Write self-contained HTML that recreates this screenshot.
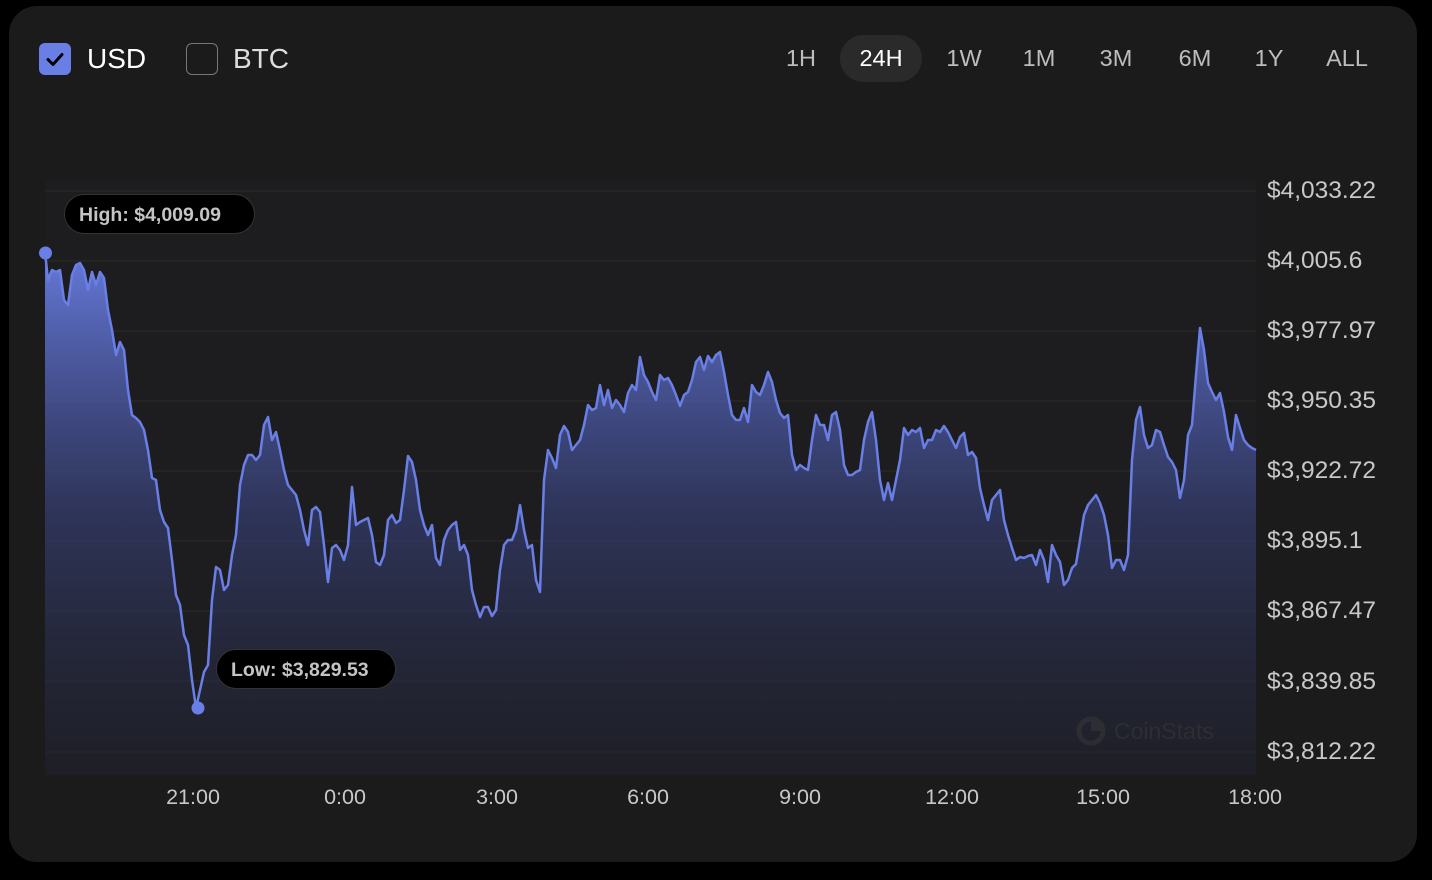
<!DOCTYPE html>
<html><head><meta charset="utf-8"><style>
html,body{margin:0;padding:0;background:#000;width:1432px;height:880px;overflow:hidden;font-family:"Liberation Sans",Arial,sans-serif}
.card{position:absolute;left:9px;top:6px;width:1408px;height:856px;background:#1b1b1b;border-radius:28px}
.cb{position:absolute;top:43px;width:32px;height:32px;border-radius:6px;box-sizing:border-box}
.lbl{position:absolute;top:42px;font-size:28px;line-height:34px}
.tb{position:absolute;top:35px;height:47px;line-height:47px;font-size:23.5px;color:#bdbdbd;text-align:center;transform:translateX(-50%)}
.yl{position:absolute;left:1267px;font-size:24.5px;color:#c8c8c8;line-height:26px}
.xl{position:absolute;top:785px;font-size:21.5px;color:#c8c8c8;transform:translateX(-50%)}
.pill{position:absolute;height:40px;line-height:40px;background:#000;border:1px solid #333;border-radius:21px;color:#c4c4c4;font-weight:bold;font-size:19.5px;padding:0 14px;box-sizing:border-box;white-space:nowrap}
</style></head><body>
<div class="card"></div>
<div class="cb" style="left:39px;background:#6a7fe6"><svg width="32" height="32"><path d="M9 16.5l5 5 9-10" stroke="#000" stroke-width="3" fill="none" stroke-linecap="round" stroke-linejoin="round"/></svg></div>
<div class="lbl" style="left:87px;color:#fff">USD</div>
<div class="cb" style="left:186px;border:1.5px solid #777"></div>
<div class="lbl" style="left:233px;color:#ddd">BTC</div>
<div style="position:absolute;left:840px;top:35px;width:82px;height:47px;border-radius:24px;background:#2a2a2a"></div>
<div class="tb" style="left:801px">1H</div>
<div class="tb" style="left:881px;color:#fff">24H</div>
<div class="tb" style="left:964px">1W</div>
<div class="tb" style="left:1039px">1M</div>
<div class="tb" style="left:1116px">3M</div>
<div class="tb" style="left:1195px">6M</div>
<div class="tb" style="left:1269px">1Y</div>
<div class="tb" style="left:1347px">ALL</div>
<svg style="position:absolute;left:0;top:0" width="1432" height="880">
<defs><linearGradient id="g" gradientUnits="userSpaceOnUse" x1="0" y1="250" x2="0" y2="775"><stop offset="0" stop-color="#6a7fe6" stop-opacity="0.95"/><stop offset="0.5" stop-color="#3a4480" stop-opacity="0.6"/><stop offset="1" stop-color="#1f2130" stop-opacity="0.4"/></linearGradient></defs>
<rect x="45" y="180" width="1211" height="595" fill="#1d1d1f"/>
<g stroke="#2a2a2a" stroke-width="1">
<line x1="45" y1="191" x2="1256" y2="191"/><line x1="45" y1="261" x2="1256" y2="261"/><line x1="45" y1="331" x2="1256" y2="331"/><line x1="45" y1="401" x2="1256" y2="401"/><line x1="45" y1="471" x2="1256" y2="471"/><line x1="45" y1="541" x2="1256" y2="541"/><line x1="45" y1="611" x2="1256" y2="611"/><line x1="45" y1="681" x2="1256" y2="681"/><line x1="45" y1="752" x2="1256" y2="752"/>
</g>
<g id="d">
<polygon fill="url(#g)" points="45,775 45,252 48,280 52,270 56,272 60,270 64,300 68,305 72,275 76,265 80,263 84,270 88,290 92,272 96,285 100,272 104,278 108,310 112,330 116,355 120,342 124,350 128,390 132,415 136,418 140,422 144,430 148,450 152,478 156,480 160,510 164,522 168,528 172,560 176,595 180,605 184,635 188,645 192,680 196,708 200,690 204,672 208,665 212,600 216,567 220,570 224,590 228,585 232,555 236,535 240,485 244,465 248,455 252,455 256,460 260,455 264,425 268,417 272,440 276,432 280,450 284,470 288,485 292,490 296,495 300,510 304,530 308,545 312,510 316,507 320,512 324,545 328,582 332,548 336,545 340,550 344,560 348,545 352,487 356,525 360,522 364,520 368,518 372,535 376,562 380,565 384,555 388,520 392,515 396,523 400,520 404,490 408,456 412,462 416,480 420,510 424,525 428,535 432,525 436,558 440,565 444,540 448,530 452,525 456,522 460,550 464,545 468,555 472,590 476,605 480,617 484,607 488,607 492,616 496,610 500,570 504,545 508,540 512,540 516,530 520,505 524,530 528,548 532,545 536,580 540,592 544,480 548,450 552,458 556,468 560,435 564,426 568,432 572,450 576,445 580,440 584,425 588,405 592,410 596,408 600,385 604,405 608,390 612,408 616,400 620,405 624,412 628,393 632,385 636,390 640,357 644,375 648,382 652,392 656,400 660,375 664,380 668,378 672,385 676,395 680,406 684,395 688,392 692,380 696,362 700,357 704,370 708,356 712,362 716,355 720,352 724,372 728,395 732,415 736,420 740,420 744,408 748,422 752,385 756,392 760,395 764,385 768,372 772,382 776,400 780,413 784,418 788,415 792,455 796,470 800,465 804,468 808,470 812,440 816,415 820,425 824,425 828,440 832,415 836,412 840,430 844,465 848,475 852,475 856,472 860,470 864,440 868,422 872,412 876,440 880,480 884,500 888,483 892,500 896,480 900,460 904,428 908,435 912,430 916,432 920,428 924,448 928,440 932,440 936,430 940,432 944,426 948,432 952,440 956,448 960,437 964,433 968,455 972,452 976,458 980,488 984,505 988,520 992,500 996,495 1000,490 1004,520 1008,535 1012,548 1016,560 1020,557 1024,558 1028,556 1032,555 1036,565 1040,550 1044,560 1048,582 1052,545 1056,555 1060,562 1064,585 1068,580 1072,568 1076,564 1080,540 1084,515 1088,505 1092,500 1096,495 1100,503 1104,515 1108,535 1112,568 1116,560 1120,560 1124,570 1128,555 1132,460 1136,420 1140,407 1144,435 1148,448 1152,445 1156,430 1160,432 1164,445 1168,457 1172,462 1176,470 1180,498 1184,480 1188,435 1192,425 1196,375 1200,328 1204,350 1208,383 1212,392 1216,400 1220,393 1224,412 1228,437 1232,450 1236,415 1240,428 1244,440 1248,445 1252,448 1256,450 1256,775"/>
<polyline fill="none" stroke="#6a7fe6" stroke-width="2.5" stroke-linejoin="round" points="45,252 48,280 52,270 56,272 60,270 64,300 68,305 72,275 76,265 80,263 84,270 88,290 92,272 96,285 100,272 104,278 108,310 112,330 116,355 120,342 124,350 128,390 132,415 136,418 140,422 144,430 148,450 152,478 156,480 160,510 164,522 168,528 172,560 176,595 180,605 184,635 188,645 192,680 196,708 200,690 204,672 208,665 212,600 216,567 220,570 224,590 228,585 232,555 236,535 240,485 244,465 248,455 252,455 256,460 260,455 264,425 268,417 272,440 276,432 280,450 284,470 288,485 292,490 296,495 300,510 304,530 308,545 312,510 316,507 320,512 324,545 328,582 332,548 336,545 340,550 344,560 348,545 352,487 356,525 360,522 364,520 368,518 372,535 376,562 380,565 384,555 388,520 392,515 396,523 400,520 404,490 408,456 412,462 416,480 420,510 424,525 428,535 432,525 436,558 440,565 444,540 448,530 452,525 456,522 460,550 464,545 468,555 472,590 476,605 480,617 484,607 488,607 492,616 496,610 500,570 504,545 508,540 512,540 516,530 520,505 524,530 528,548 532,545 536,580 540,592 544,480 548,450 552,458 556,468 560,435 564,426 568,432 572,450 576,445 580,440 584,425 588,405 592,410 596,408 600,385 604,405 608,390 612,408 616,400 620,405 624,412 628,393 632,385 636,390 640,357 644,375 648,382 652,392 656,400 660,375 664,380 668,378 672,385 676,395 680,406 684,395 688,392 692,380 696,362 700,357 704,370 708,356 712,362 716,355 720,352 724,372 728,395 732,415 736,420 740,420 744,408 748,422 752,385 756,392 760,395 764,385 768,372 772,382 776,400 780,413 784,418 788,415 792,455 796,470 800,465 804,468 808,470 812,440 816,415 820,425 824,425 828,440 832,415 836,412 840,430 844,465 848,475 852,475 856,472 860,470 864,440 868,422 872,412 876,440 880,480 884,500 888,483 892,500 896,480 900,460 904,428 908,435 912,430 916,432 920,428 924,448 928,440 932,440 936,430 940,432 944,426 948,432 952,440 956,448 960,437 964,433 968,455 972,452 976,458 980,488 984,505 988,520 992,500 996,495 1000,490 1004,520 1008,535 1012,548 1016,560 1020,557 1024,558 1028,556 1032,555 1036,565 1040,550 1044,560 1048,582 1052,545 1056,555 1060,562 1064,585 1068,580 1072,568 1076,564 1080,540 1084,515 1088,505 1092,500 1096,495 1100,503 1104,515 1108,535 1112,568 1116,560 1120,560 1124,570 1128,555 1132,460 1136,420 1140,407 1144,435 1148,448 1152,445 1156,430 1160,432 1164,445 1168,457 1172,462 1176,470 1180,498 1184,480 1188,435 1192,425 1196,375 1200,328 1204,350 1208,383 1212,392 1216,400 1220,393 1224,412 1228,437 1232,450 1236,415 1240,428 1244,440 1248,445 1252,448 1256,450"/>
</g>
<circle cx="45.5" cy="253" r="6.5" fill="#6a7fe6"/>
<circle cx="198" cy="708" r="6.5" fill="#6a7fe6"/>
<g opacity="0.5"><circle cx="1091" cy="731" r="12" fill="none" stroke="#3a3a3a" stroke-width="5"/><path d="M1091 719 A12 12 0 0 1 1103 731 L1091 731Z" fill="#3a3a3a"/>
<text x="1114" y="739" font-family="Liberation Sans" font-size="23" fill="#3a3a3a">CoinStats</text></g>
</svg>
<div class="pill" style="left:64px;top:194px;width:191px">High: $4,009.09</div>
<div class="pill" style="left:216px;top:649px;width:180px">Low: $3,829.53</div>
<div class="yl" style="top:178px">$4,033.22</div>
<div class="yl" style="top:248px">$4,005.6</div>
<div class="yl" style="top:318px">$3,977.97</div>
<div class="yl" style="top:388px">$3,950.35</div>
<div class="yl" style="top:458px">$3,922.72</div>
<div class="yl" style="top:528px">$3,895.1</div>
<div class="yl" style="top:598px">$3,867.47</div>
<div class="yl" style="top:669px">$3,839.85</div>
<div class="yl" style="top:739px">$3,812.22</div>
<div class="xl" style="left:193px">21:00</div>
<div class="xl" style="left:345px">0:00</div>
<div class="xl" style="left:497px">3:00</div>
<div class="xl" style="left:648px">6:00</div>
<div class="xl" style="left:800px">9:00</div>
<div class="xl" style="left:952px">12:00</div>
<div class="xl" style="left:1103px">15:00</div>
<div class="xl" style="left:1255px">18:00</div>
</body></html>
